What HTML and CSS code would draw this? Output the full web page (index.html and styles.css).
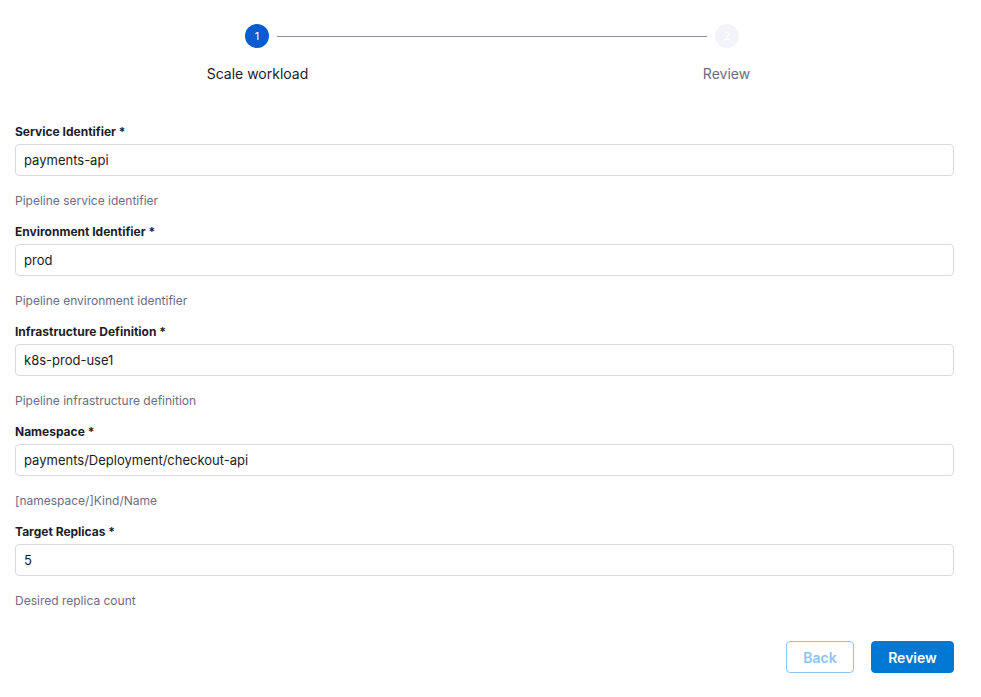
FILE: index.html
```html
<!DOCTYPE html>
<html>
<head>
<meta charset="utf-8">
<link rel="stylesheet" href="styles.css">
</head>
<body>
<div class="page">
  <div class="stepper">
    <div class="track">
      <div class="dot active">1</div>
      <div class="line"></div>
      <div class="dot">2</div>
    </div>
    <div class="labels">
      <div class="step-label active">Scale workload</div>
      <div class="step-label">Review</div>
    </div>
  </div>

  <form class="form">
    <div class="field">
      <label class="label">Service Identifier *</label>
      <input class="input" type="text" value="payments-api">
      <div class="help">Pipeline service identifier</div>
    </div>
    <div class="field">
      <label class="label">Environment Identifier *</label>
      <input class="input" type="text" value="prod">
      <div class="help">Pipeline environment identifier</div>
    </div>
    <div class="field">
      <label class="label">Infrastructure Definition *</label>
      <input class="input" type="text" value="k8s-prod-use1">
      <div class="help">Pipeline infrastructure definition</div>
    </div>
    <div class="field">
      <label class="label">Namespace *</label>
      <input class="input" type="text" value="payments/Deployment/checkout-api">
      <div class="help">[namespace/]Kind/Name</div>
    </div>
    <div class="field">
      <label class="label">Target Replicas *</label>
      <input class="input" type="text" value="5">
      <div class="help">Desired replica count</div>
    </div>
    <div class="actions">
      <button type="button" class="btn btn-back" disabled>Back</button>
      <button type="button" class="btn btn-primary">Review</button>
    </div>
  </form>
</div>
</body>
</html>
```

FILE: styles.css
```css
* { box-sizing: border-box; }
html, body {
  margin: 0;
  padding: 0;
  background: #ffffff;
  font-family: Inter, "Noto Sans", sans-serif;
  color: #1c1c28;
}
.page {
  padding: 24px 27px 0 15px;
}
.stepper {
  width: 938px;
  margin-left: 8px;
}
.track {
  display: flex;
  align-items: center;
  padding: 0 222px;
  height: 24px;
}
.dot {
  width: 24px;
  height: 24px;
  border-radius: 50%;
  background: #f3f3fa;
  color: #ffffff;
  font-size: 11px;
  display: flex;
  align-items: center;
  justify-content: center;
  flex: none;
}
.dot.active {
  background: #0b5cd0;
}
.line {
  flex: 1;
  height: 1px;
  background: #8d8da3;
  margin: 0 8px;
}
.labels {
  display: grid;
  grid-template-columns: 1fr 1fr;
  margin-top: 17px;
}
.step-label {
  text-align: center;
  font-size: 14px;
  line-height: 18px;
  color: #6b6d85;
}
.step-label.active {
  color: #1c1c28;
}
.form {
  margin-top: 41px;
  width: 939px;
}
.field {
  display: flex;
  flex-direction: column;
  margin-bottom: 15px;
}
.label {
  font-size: 12px;
  font-weight: 700;
  line-height: 16px;
  color: #1c1c28;
  margin-bottom: 4px;
}
.input {
  height: 32px;
  border: 1px solid #d9dae5;
  border-radius: 4px;
  padding: 0 8px;
  font-family: Inter, "Noto Sans", sans-serif;
  font-size: 13px;
  color: #1c1c28;
  background: #fff;
  outline: none;
}
.help {
  margin-top: 17px;
  font-size: 12px;
  line-height: 16px;
  color: #6b6d85;
}
.actions {
  display: flex;
  justify-content: flex-end;
  gap: 17px;
  margin-top: 32px;
}
.btn {
  height: 32px;
  border-radius: 4px;
  font-family: Inter, "Noto Sans", sans-serif;
  font-size: 14px;
  font-weight: 600;
  padding: 0 16px;
  cursor: pointer;
}
.btn-back {
  width: 68px;
  background: #fff;
  border: 1px solid #8ec3ee;
  color: #8ec3ee;
}
.btn-primary {
  width: 83px;
  background: #0278d5;
  border: 1px solid #0278d5;
  color: #fff;
}
```
